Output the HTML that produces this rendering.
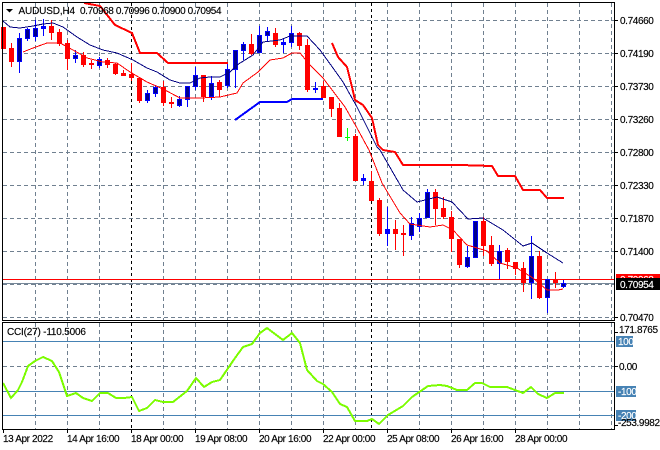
<!DOCTYPE html>
<html><head><meta charset="utf-8"><style>
html,body{margin:0;padding:0;background:#fff;width:660px;height:450px;overflow:hidden}
svg{display:block}
text{font-family:"Liberation Sans",sans-serif;font-size:10px;letter-spacing:-.38px;fill:#000;stroke:#000;stroke-width:.15px}
.w{fill:#fff!important;stroke:#fff!important}
.c,polyline{shape-rendering:crispEdges}
</style></head><body>
<svg width="660" height="450" viewBox="0 0 660 450" xmlns="http://www.w3.org/2000/svg">
<rect width="660" height="450" fill="#fff"/>
<g class="c" fill="none" stroke="#708090" stroke-dasharray="4 3">
<path d="M3 20.5H614M3 53.5H614M3 86.5H614M3 119.5H614M3 152.5H614M3 185.5H614M3 218.5H614M3 251.5H614M3 284.5H614M3 317.5H614M3 366.5H614"/>
<path d="M35.5 3V320M67.5 3V320M99.5 3V320M163.5 3V320M195.5 3V320M227.5 3V320M259.5 3V320M291.5 3V320M323.5 3V320M355.5 3V320M387.5 3V320M419.5 3V320M451.5 3V320M483.5 3V320M515.5 3V320M547.5 3V320M579.5 3V320M611.5 3V320"/>
<path d="M35.5 323V429M67.5 323V429M99.5 323V429M163.5 323V429M195.5 323V429M227.5 323V429M259.5 323V429M291.5 323V429M323.5 323V429M355.5 323V429M387.5 323V429M419.5 323V429M451.5 323V429M483.5 323V429M515.5 323V429M547.5 323V429M579.5 323V429M611.5 323V429"/>
</g>
<path class="c" fill="none" stroke="#000" stroke-dasharray="3 3" d="M131.5 3V320M131.5 323V429M371.5 3V320M371.5 323V429"/>
<path class="c" fill="none" stroke="#4682b4" d="M3 341.5H614M3 391.5H614M3 415.5H614"/>
<path class="c" fill="none" stroke="#f00" d="M3 279.5H615"/>
<path class="c" fill="none" stroke="#778899" d="M3 283.5H615"/>

<path class="c" fill="none" stroke="#f00" d="M11.5 43V67M51.5 20V40M59.5 29V46M67.5 40V70M83.5 52V67M91.5 60V69M107.5 58V68M115.5 63V75M123.5 70V76M131.5 63V81M139.5 78V103M163.5 81V106M171.5 97V108M203.5 75V102M219.5 80V97M251.5 34V55M275.5 28V47M299.5 32V50M307.5 39V92M323.5 81V98M331.5 97V117M339.5 103V137M355.5 134V181M371.5 171V201M379.5 198V236M395.5 220V250M403.5 225V256M435.5 189V225M443.5 197V219M451.5 211V252M459.5 239V268M483.5 217V256M491.5 236V266M507.5 248V269M515.5 262V275M523.5 262V292M539.5 251V299M555.5 272V288"/>
<path class="c" fill="#f00" d="M1 27h5v22h-5zM9 48h5v14h-5zM49 26h5v7h-5zM57 32h5v12h-5zM65 43h5v16h-5zM81 55h5v10h-5zM89 63h5v2h-5zM105 60h5v5h-5zM113 64h5v10h-5zM121 73h5v3h-5zM129 74h5v4h-5zM137 78h5v23h-5zM161 87h5v16h-5zM169 102h5v2h-5zM201 75h5v22h-5zM217 82h5v8h-5zM249 44h5v10h-5zM273 33h5v12h-5zM297 33h5v13h-5zM305 45h5v45h-5zM321 86h5v12h-5zM329 97h5v12h-5zM337 108h5v29h-5zM353 136h5v45h-5zM369 181h5v20h-5zM377 200h5v34h-5zM393 229h5v5h-5zM401 233h5v2h-5zM433 192h5v17h-5zM441 208h5v9h-5zM449 217h5v22h-5zM457 239h5v26h-5zM481 221h5v25h-5zM489 245h5v19h-5zM505 250h5v12h-5zM513 262h5v7h-5zM521 268h5v15h-5zM537 256h5v42h-5zM553 280h5v3h-5z"/>
<path class="c" fill="none" stroke="#00f" d="M19.5 33V73M27.5 28V41M35.5 20V41M43.5 19V36M75.5 50V63M99.5 57V68M147.5 90V103M155.5 85V97M179.5 96V107M187.5 86V107M195.5 67V90M211.5 76V100M227.5 63V88M235.5 50V88M243.5 42V60M259.5 26V53M267.5 27V41M283.5 38V53M291.5 26V47M315.5 82V93M363.5 174V185M387.5 207V246M411.5 217V240M419.5 213V232M427.5 189V218M467.5 246V268M475.5 221V258M499.5 245V279M531.5 236V299M547.5 279V313M563.5 280V288"/>
<path class="c" fill="#00f" d="M17 38h5v24h-5zM25 29h5v10h-5zM33 28h5v9h-5zM41 26h5v3h-5zM73 55h5v4h-5zM97 59h5v7h-5zM145 93h5v8h-5zM153 87h5v7h-5zM177 99h5v7h-5zM185 86h5v14h-5zM193 75h5v12h-5zM209 83h5v14h-5zM225 69h5v17h-5zM233 50h5v20h-5zM241 44h5v7h-5zM257 35h5v18h-5zM265 31h5v5h-5zM281 42h5v3h-5zM289 33h5v10h-5zM313 88h5v2h-5zM361 178h5v3h-5zM385 229h5v5h-5zM409 223h5v13h-5zM417 218h5v9h-5zM425 192h5v26h-5zM465 257h5v10h-5zM473 221h5v37h-5zM497 251h5v13h-5zM529 256h5v27h-5zM545 279h5v19h-5zM561 283h5v4h-5z"/>
<path class="c" fill="#00008b" d="M18 39h3v22h-3zM26 30h3v8h-3zM34 29h3v7h-3zM74 56h3v2h-3zM98 60h3v5h-3zM146 94h3v6h-3zM154 88h3v5h-3zM178 100h3v5h-3zM186 87h3v12h-3zM194 76h3v10h-3zM210 84h3v12h-3zM226 70h3v15h-3zM234 51h3v18h-3zM242 45h3v5h-3zM258 36h3v16h-3zM266 32h3v3h-3zM290 34h3v8h-3zM410 224h3v11h-3zM418 219h3v7h-3zM426 193h3v24h-3zM466 258h3v8h-3zM474 222h3v35h-3zM498 252h3v11h-3zM530 257h3v25h-3zM546 280h3v17h-3zM562 284h3v2h-3z"/>
<path class="c" fill="none" stroke="#0f0" d="M347.5 128V141M345 137.5H350"/>

<polyline fill="none" stroke="#000080" stroke-width="1" points="3,21 10,27 20,28 33,26 43,24 53,23 63,27 77,37 90,45 103,50 117,53 133,60 147,68 157,72 170,80 180,83 190,83 200,78 210,77 220,77 230,72 237,65 253,55 263,42 280,40 290,36 307,36 320,50 333,68 343,82 357,107 367,127 377,147 380,150 403,190 417,202 425,200 437,197 452,202 468,219 483,218 503,230 523,246 532,243 547,253 563,263"/>
<polyline fill="none" stroke="#f00" stroke-width="1" points="23,52 33,48 47,43 60,43 73,50 87,58 103,62 117,63 130,72 147,82 163,89 180,98 200,98 220,97 237,93 243,83 258,72 270,60 283,58 292,53 300,53 310,65 323,78 345,107 357,128 369,150 382,183 400,213 410,224 430,227 443,225 453,230 467,245 487,251 500,263 517,268 533,278 547,290 558,290 563,289"/>
<g fill="none" stroke-width="2">
<polyline stroke="#f00" points="84,3 100,6 115,25 132,33 140,53 157,53 168,63 228,63"/>
<polyline stroke="#f00" points="332,43 338,57 347,67 352,87 355,100 363,105 372,118 378,145 383,150 395,152 403,165 460,165 492,166 498,176 515,176 523,190 540,190 547,198 564,198"/>
<polyline stroke="#00f" points="235,120 260,102 287,102 292,99 323,99"/>
</g>
<polyline fill="none" stroke="#7cfc00" stroke-width="2" points="3,383 11,398 18,390 22,382 28,366 35,361 43,357 52,361 59,372 67,396 76,393 83,398 92,401 100,393 108,393 116,398 124,398 132,397 139,411 147,408 155,400 163,402 173,402 187,391 196,378 204,387 212,382 220,380 235,358 243,347 252,344 260,333 267,328 283,340 292,333 300,343 307,370 317,381 323,384 332,392 340,404 347,407 355,421 367,421 372,419 379,424 388,415 403,406 412,397 428,386 440,385 447,386 457,390 467,390 475,383 482,383 490,387 507,387 523,393 531,387 538,394 547,398 555,393 564,393"/>

<g class="c" fill="none" stroke="#000">
<path d="M2.5 2.5H614.5V320.5H2.5zM2.5 322.5H614.5V429.5H2.5z"/>
<path d="M615 20.5h3M615 53.5h3M615 86.5h3M615 119.5h3M615 152.5h3M615 185.5h3M615 218.5h3M615 251.5h3M615 317.5h3M615 332.5h3M615 366.5h3M615 425.5h3"/>
<path d="M3.5 430v3M67.5 430v3M131.5 430v3M195.5 430v3M259.5 430v3M323.5 430v3M387.5 430v3M451.5 430v3M515.5 430v3"/>
</g>
<path d="M6 9h7l-3.5 3.5z" fill="#000"/>
<text x="18.5" y="14" style="letter-spacing:-.15px">AUDUSD,H4</text>
<text x="80" y="14">0.70968 0.70996 0.70900 0.70954</text>
<text x="7" y="335" style="letter-spacing:-.2px">CCI(27) -110.5006</text>

<g>
<text x="620" y="24">0.74660</text>
<text x="620" y="57">0.74190</text>
<text x="620" y="90">0.73730</text>
<text x="620" y="123">0.73260</text>
<text x="620" y="156">0.72800</text>
<text x="620" y="189">0.72330</text>
<text x="620" y="222">0.71870</text>
<text x="620" y="255">0.71400</text>
<text x="620" y="321">0.70470</text>
<rect class="c" x="616" y="274" width="44" height="10" fill="#f00"/>
<text class="w" x="620" y="283">0.70968</text>
<rect class="c" x="616" y="278" width="44" height="12" fill="#000"/>
<text class="w" x="620" y="288">0.70954</text>
<text x="619" y="333">171.8765</text>
<rect class="c" x="616" y="336" width="17" height="11" fill="#4682b4"/>
<text class="w" x="618" y="345">100</text>
<text x="619" y="370">0.00</text>
<rect class="c" x="616" y="386" width="20" height="11" fill="#4682b4"/>
<text class="w" x="618" y="395">-100</text>
<rect class="c" x="616" y="410" width="20" height="11" fill="#4682b4"/>
<text class="w" x="618" y="419">-200</text>
<text x="618" y="426">-253.9982</text>
</g>
<g>
<text x="3" y="442">13 Apr 2022</text>
<text x="67" y="442">14 Apr 16:00</text>
<text x="131" y="442">18 Apr 00:00</text>
<text x="195" y="442">19 Apr 08:00</text>
<text x="259" y="442">20 Apr 16:00</text>
<text x="323" y="442">22 Apr 00:00</text>
<text x="387" y="442">25 Apr 08:00</text>
<text x="451" y="442">26 Apr 16:00</text>
<text x="515" y="442">28 Apr 00:00</text>
</g>
</svg>
</body></html>
